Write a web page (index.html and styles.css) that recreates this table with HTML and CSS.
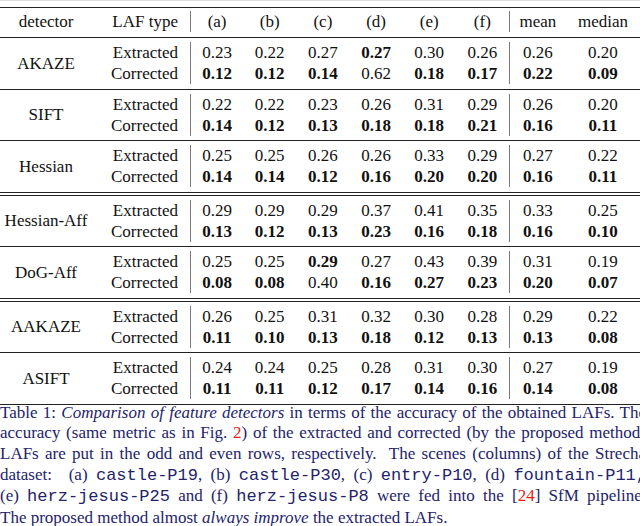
FILE: index.html
```html
<!DOCTYPE html>
<html>
<head>
<meta charset="utf-8">
<link rel="stylesheet" href="styles.css">
</head>
<body>
<div class="page">
  <div class="rule"></div>
  <div class="grp head">
    <div class="det">detector</div><div class="laf">LAF type</div>
    <div class="n vl">(a)</div><div class="n">(b)</div><div class="n">(c)</div><div class="n">(d)</div><div class="n">(e)</div><div class="n">(f)</div>
    <div class="n vl">mean</div><div class="n">median</div>
  </div>
  <div class="rule"></div>
  <div class="grp">
    <div class="det">AKAZE</div>
    <div class="laf">Extracted</div><div class="n vl">0.23</div><div class="n">0.22</div><div class="n">0.27</div><div class="n b">0.27</div><div class="n">0.30</div><div class="n">0.26</div><div class="n vl">0.26</div><div class="n">0.20</div>
    <div class="laf">Corrected</div><div class="n vl b">0.12</div><div class="n b">0.12</div><div class="n b">0.14</div><div class="n">0.62</div><div class="n b">0.18</div><div class="n b">0.17</div><div class="n vl b">0.22</div><div class="n b">0.09</div>
  </div>
  <div class="rule"></div>
  <div class="grp">
    <div class="det">SIFT</div>
    <div class="laf">Extracted</div><div class="n vl">0.22</div><div class="n">0.22</div><div class="n">0.23</div><div class="n">0.26</div><div class="n">0.31</div><div class="n">0.29</div><div class="n vl">0.26</div><div class="n">0.20</div>
    <div class="laf">Corrected</div><div class="n vl b">0.14</div><div class="n b">0.12</div><div class="n b">0.13</div><div class="n b">0.18</div><div class="n b">0.18</div><div class="n b">0.21</div><div class="n vl b">0.16</div><div class="n b">0.11</div>
  </div>
  <div class="rule"></div>
  <div class="grp">
    <div class="det">Hessian</div>
    <div class="laf">Extracted</div><div class="n vl">0.25</div><div class="n">0.25</div><div class="n">0.26</div><div class="n">0.26</div><div class="n">0.33</div><div class="n">0.29</div><div class="n vl">0.27</div><div class="n">0.22</div>
    <div class="laf">Corrected</div><div class="n vl b">0.14</div><div class="n b">0.14</div><div class="n b">0.12</div><div class="n b">0.16</div><div class="n b">0.20</div><div class="n b">0.20</div><div class="n vl b">0.16</div><div class="n b">0.11</div>
  </div>
  <div class="rule2"></div>
  <div class="grp">
    <div class="det">Hessian-Aff</div>
    <div class="laf">Extracted</div><div class="n vl">0.29</div><div class="n">0.29</div><div class="n">0.29</div><div class="n">0.37</div><div class="n">0.41</div><div class="n">0.35</div><div class="n vl">0.33</div><div class="n">0.25</div>
    <div class="laf">Corrected</div><div class="n vl b">0.13</div><div class="n b">0.12</div><div class="n b">0.13</div><div class="n b">0.23</div><div class="n b">0.16</div><div class="n b">0.18</div><div class="n vl b">0.16</div><div class="n b">0.10</div>
  </div>
  <div class="rule"></div>
  <div class="grp">
    <div class="det">DoG-Aff</div>
    <div class="laf">Extracted</div><div class="n vl">0.25</div><div class="n">0.25</div><div class="n b">0.29</div><div class="n">0.27</div><div class="n">0.43</div><div class="n">0.39</div><div class="n vl">0.31</div><div class="n">0.19</div>
    <div class="laf">Corrected</div><div class="n vl b">0.08</div><div class="n b">0.08</div><div class="n">0.40</div><div class="n b">0.16</div><div class="n b">0.27</div><div class="n b">0.23</div><div class="n vl b">0.20</div><div class="n b">0.07</div>
  </div>
  <div class="rule2"></div>
  <div class="grp">
    <div class="det">AAKAZE</div>
    <div class="laf">Extracted</div><div class="n vl">0.26</div><div class="n">0.25</div><div class="n">0.31</div><div class="n">0.32</div><div class="n">0.30</div><div class="n">0.28</div><div class="n vl">0.29</div><div class="n">0.22</div>
    <div class="laf">Corrected</div><div class="n vl b">0.11</div><div class="n b">0.10</div><div class="n b">0.13</div><div class="n b">0.18</div><div class="n b">0.12</div><div class="n b">0.13</div><div class="n vl b">0.13</div><div class="n b">0.08</div>
  </div>
  <div class="rule"></div>
  <div class="grp">
    <div class="det">ASIFT</div>
    <div class="laf">Extracted</div><div class="n vl">0.24</div><div class="n">0.24</div><div class="n">0.25</div><div class="n">0.28</div><div class="n">0.31</div><div class="n">0.30</div><div class="n vl">0.27</div><div class="n">0.19</div>
    <div class="laf">Corrected</div><div class="n vl b">0.11</div><div class="n b">0.11</div><div class="n b">0.12</div><div class="n b">0.17</div><div class="n b">0.14</div><div class="n b">0.16</div><div class="n vl b">0.14</div><div class="n b">0.08</div>
  </div>
  <div class="rule"></div>
  <div class="caption">
    <div class="ln">Table 1: <i>Comparison of feature detectors</i> in terms of the accuracy of the obtained LAFs. The</div>
    <div class="ln">accuracy (same metric as in Fig. <span class="ref">2</span>) of the extracted and corrected (by the proposed method)</div>
    <div class="ln">LAFs are put in the odd and even rows, respectively.&nbsp; The scenes (columns) of the Strecha</div>
    <div class="ln">dataset:&nbsp; (a) <span class="tt">castle-P19</span>, (b) <span class="tt">castle-P30</span>, (c) <span class="tt">entry-P10</span>, (d) <span class="tt">fountain-P11,</span></div>
    <div class="ln">(e) <span class="tt">herz-jesus-P25</span> and (f) <span class="tt">herz-jesus-P8</span> were fed into the [<span class="ref">24</span>] SfM pipeline.</div>
    <div class="ln last">The proposed method almost <i>always improve</i> the extracted LAFs.</div>
  </div>
</div>
</body>
</html>
```

FILE: styles.css
```css
html, body {
  margin: 0;
  padding: 0;
  background: #ffffff;
}
body {
  width: 640px;
  height: 526px;
  overflow: hidden;
  font-family: "Liberation Serif", "Times New Roman", serif;
  font-size: 17px;
  color: #111111;
}
.page {
  border-top: 1px solid #dcdcdc;
  padding-top: 6px;
}
.rule {
  height: 0;
  border-top: 1px solid #222222;
}
.rule2 {
  height: 2px;
  border-top: 1px solid #222222;
  border-bottom: 1px solid #222222;
}
.grp {
  display: grid;
  grid-template-columns: 92px 98px repeat(6, 53.17px) 57px 74px;
  grid-auto-rows: 21px;
  line-height: 21px;
  padding: 4px 0 4.5px;
}
.grp.head {
  padding: 3px 0 5px;
}
.det {
  grid-column: 1;
  grid-row: span 2;
  text-align: center;
  align-self: center;
  white-space: nowrap;
}
.head .det {
  grid-row: span 1;
}
.laf {
  grid-column: 2;
  text-align: right;
  padding-right: 12px;
  white-space: nowrap;
}
.n {
  text-align: center;
  white-space: nowrap;
}
.vl {
  border-left: 1px solid #7a7a7a;
}
.b {
  font-weight: bold;
}
.caption {
  margin-top: -2px;
  width: 646px;
  color: #23236b;
  line-height: 20.7px;
}
.ln {
  white-space: nowrap;
  text-align: justify;
  text-align-last: justify;
}
.ln.last {
  text-align-last: left;
}
.tt {
  font-family: "Liberation Mono", "Courier New", monospace;
}
.ref {
  color: #e2231a;
}
```
